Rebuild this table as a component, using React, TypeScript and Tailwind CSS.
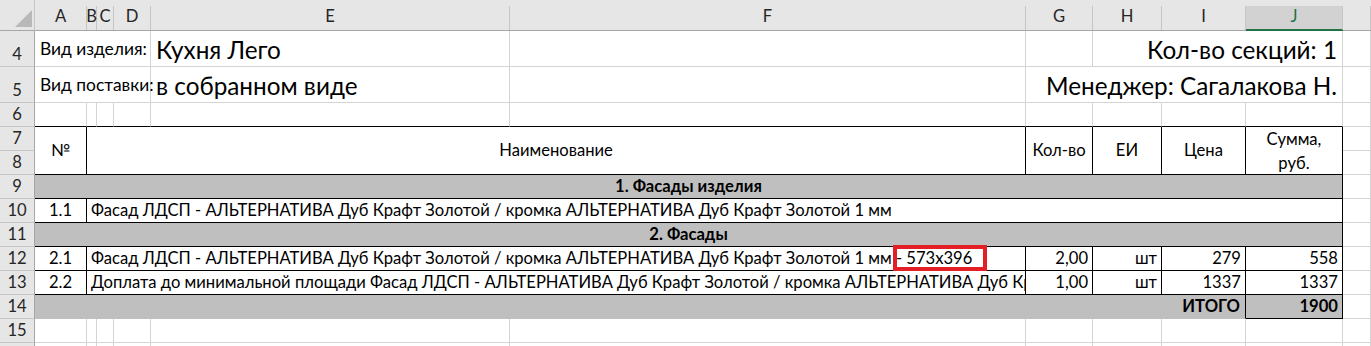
import React from "react";

type CellProps = {
  className?: string;
  mid?: boolean;
  spill?: boolean;
  children?: React.ReactNode;
};

// mid = vertically centred (merged header cells, top info rows); default is Excel's bottom alignment
// spill = text may run past the cell edge, like Excel overflow into empty neighbours
const Cell: React.FC<CellProps> = ({ className = "", mid = false, spill = false, children }) => (
  <div
    className={`flex whitespace-nowrap border-r border-b border-[#d4d4d4] leading-none ${
      spill ? "overflow-visible" : "overflow-hidden"
    } ${mid ? "items-center" : "items-end pb-[3px]"} ${className}`}
  >
    {children}
  </div>
);

const RowHead: React.FC<{ n: number | string }> = ({ n }) => (
  <div className="flex items-end justify-center overflow-hidden border-r border-b border-[#c6c6c6] border-r-[#a6a6a6] bg-[#e6e6e6] pb-[3px] leading-none text-[#262626]">
    {n}
  </div>
);

const ColHead: React.FC<{ label?: string; active?: boolean }> = ({ label = "", active = false }) => (
  <div className={`border-b bg-[#e6e6e6] pt-[6px] ${active ? "border-[#217346]" : "border-[#a6a6a6]"}`}>
    <div
      className={`flex h-full items-end justify-center border-r border-[#c6c6c6] leading-none ${
        active ? "border-b border-b-[#217346] bg-[#d2d2d2] pb-[4px] text-[#217346]" : "pb-[5px] text-[#262626]"
      }`}
    >
      {label}
    </div>
  </div>
);

const desc =
  "Фасад ЛДСП - АЛЬТЕРНАТИВА Дуб Крафт Золотой / кромка АЛЬТЕРНАТИВА Дуб Крафт Золотой 1 мм";

const App: React.FC = () => {
  const blk = "border-r-black border-b-black";
  const big = "pt-[4px] text-[24.3px]";
  const label = "pl-[5px] text-[17.4px]";

  return (
    <div className="relative h-[346px] w-[1371px] overflow-hidden bg-white font-['Lato','Noto_Sans',sans-serif] text-[16.6px] text-black">
      <div className="grid grid-cols-[35px_52px_10px_17px_37px_359px_516px_67px_69px_84px_97px_28px] grid-rows-[31px_36px_36px_24px_24px_24px_24px_24px_24px_24px_24px_24px_24px_24px]">
        {/* column headers */}
        <div className="border-r border-b border-[#a6a6a6] border-r-[#c6c6c6] bg-[#e6e6e6]">
          <svg width="34" height="30" viewBox="0 0 34 30">
            <polygon points="32,10 32,27 15,27" fill="#b9b9b9" />
          </svg>
        </div>
        <ColHead label="A" />
        <ColHead label="B" />
        <ColHead label="C" />
        <ColHead label="D" />
        <ColHead label="E" />
        <ColHead label="F" />
        <ColHead label="G" />
        <ColHead label="H" />
        <ColHead label="I" />
        <ColHead label="J" active />
        <ColHead />

        {/* row 4 */}
        <RowHead n={4} />
        <Cell mid spill className={`col-span-4 ${label}`}>Вид изделия:</Cell>
        <Cell mid className={`px-[5px] ${big}`}>Кухня Лего</Cell>
        <Cell />
        <Cell />
        <Cell mid className={`col-span-3 justify-end pr-[5px] ${big}`}>Кол-во секций: 1</Cell>
        <Cell />

        {/* row 5 */}
        <RowHead n={5} />
        <Cell mid spill className={`col-span-4 ${label}`}>Вид поставки:</Cell>
        <Cell mid className={`px-[5px] ${big}`}>в собранном виде</Cell>
        <Cell />
        <Cell mid className={`col-span-4 justify-end pr-[5px] ${big}`}>Менеджер: Сагалакова Н.</Cell>
        <Cell />

        {/* row 6 */}
        <RowHead n={6} />
        <Cell className="border-b-black" />
        <Cell className="border-b-black" />
        <Cell className="border-b-black" />
        <Cell className="border-b-black" />
        <Cell className="border-b-black" />
        <Cell className="border-b-black" />
        <Cell className="border-b-black" />
        <Cell className="border-b-black" />
        <Cell className="border-b-black" />
        <Cell className="border-b-black" />
        <Cell />

        {/* rows 7-8: table header */}
        <RowHead n={7} />
        <Cell mid className={`row-span-2 justify-center ${blk}`}>№</Cell>
        <Cell mid className={`col-span-5 row-span-2 justify-center ${blk}`}>Наименование</Cell>
        <Cell mid className={`row-span-2 justify-center ${blk}`}>Кол-во</Cell>
        <Cell mid className={`row-span-2 justify-center ${blk}`}>ЕИ</Cell>
        <Cell mid className={`row-span-2 justify-center ${blk}`}>Цена</Cell>
        <Cell mid className={`row-span-2 justify-center ${blk}`}>
          <span className="whitespace-pre text-center leading-[24px]">{"Сумма,\nруб."}</span>
        </Cell>
        <Cell />
        <RowHead n={8} />
        <Cell />

        {/* row 9 */}
        <RowHead n={9} />
        <Cell className={`col-span-10 justify-center bg-[#bfbfbf] font-bold ${blk}`}>1. Фасады изделия</Cell>
        <Cell />

        {/* row 10 */}
        <RowHead n={10} />
        <Cell className={`justify-center ${blk}`}>1.1</Cell>
        <Cell className={`col-span-9 px-[4px] ${blk}`}>{desc}</Cell>
        <Cell />

        {/* row 11 */}
        <RowHead n={11} />
        <Cell className={`col-span-10 justify-center bg-[#bfbfbf] font-bold ${blk}`}>2. Фасады</Cell>
        <Cell />

        {/* row 12 */}
        <RowHead n={12} />
        <Cell className={`justify-center ${blk}`}>2.1</Cell>
        <Cell className={`col-span-5 px-[4px] ${blk}`}>{desc} - 573x396</Cell>
        <Cell className={`justify-end pr-[4px] ${blk}`}>2,00</Cell>
        <Cell className={`justify-end pr-[4px] ${blk}`}>шт</Cell>
        <Cell className={`justify-end pr-[4px] ${blk}`}>279</Cell>
        <Cell className={`justify-end pr-[4px] ${blk}`}>558</Cell>
        <Cell />

        {/* row 13 */}
        <RowHead n={13} />
        <Cell className={`justify-center ${blk}`}>2.2</Cell>
        <Cell className={`col-span-5 px-[4px] ${blk}`}>
          Доплата до минимальной площади Фасад ЛДСП - АЛЬТЕРНАТИВА Дуб Крафт Золотой / кромка АЛЬТЕРНАТИВА Дуб
          Крафт Золотой 1 мм
        </Cell>
        <Cell className={`justify-end pr-[4px] ${blk}`}>1,00</Cell>
        <Cell className={`justify-end pr-[4px] ${blk}`}>шт</Cell>
        <Cell className={`justify-end pr-[4px] ${blk}`}>1337</Cell>
        <Cell className={`justify-end pr-[4px] ${blk}`}>1337</Cell>
        <Cell />

        {/* row 14 */}
        <RowHead n={14} />
        <Cell className="col-span-9 justify-end border-r-black border-b-[#bfbfbf] bg-[#bfbfbf] pr-[5px] font-bold">
          ИТОГО
        </Cell>
        <Cell className={`justify-end bg-[#bfbfbf] pr-[4px] font-bold ${blk}`}>1900</Cell>
        <Cell />

        {/* row 15 */}
        <RowHead n={15} />
        <Cell />
        <Cell />
        <Cell />
        <Cell />
        <Cell />
        <Cell />
        <Cell />
        <Cell />
        <Cell />
        <Cell />
        <Cell />

        {/* row 16 */}
        <RowHead n={16} />
        <Cell />
        <Cell />
        <Cell />
        <Cell />
        <Cell />
        <Cell />
        <Cell />
        <Cell />
        <Cell />
        <Cell />
        <Cell />
      </div>

      {/* red annotation frame drawn over the sheet */}
      <div className="absolute left-[893px] top-[245px] h-[26px] w-[94px] border-4 border-[#e31e24]" />
    </div>
  );
};

export default App;
